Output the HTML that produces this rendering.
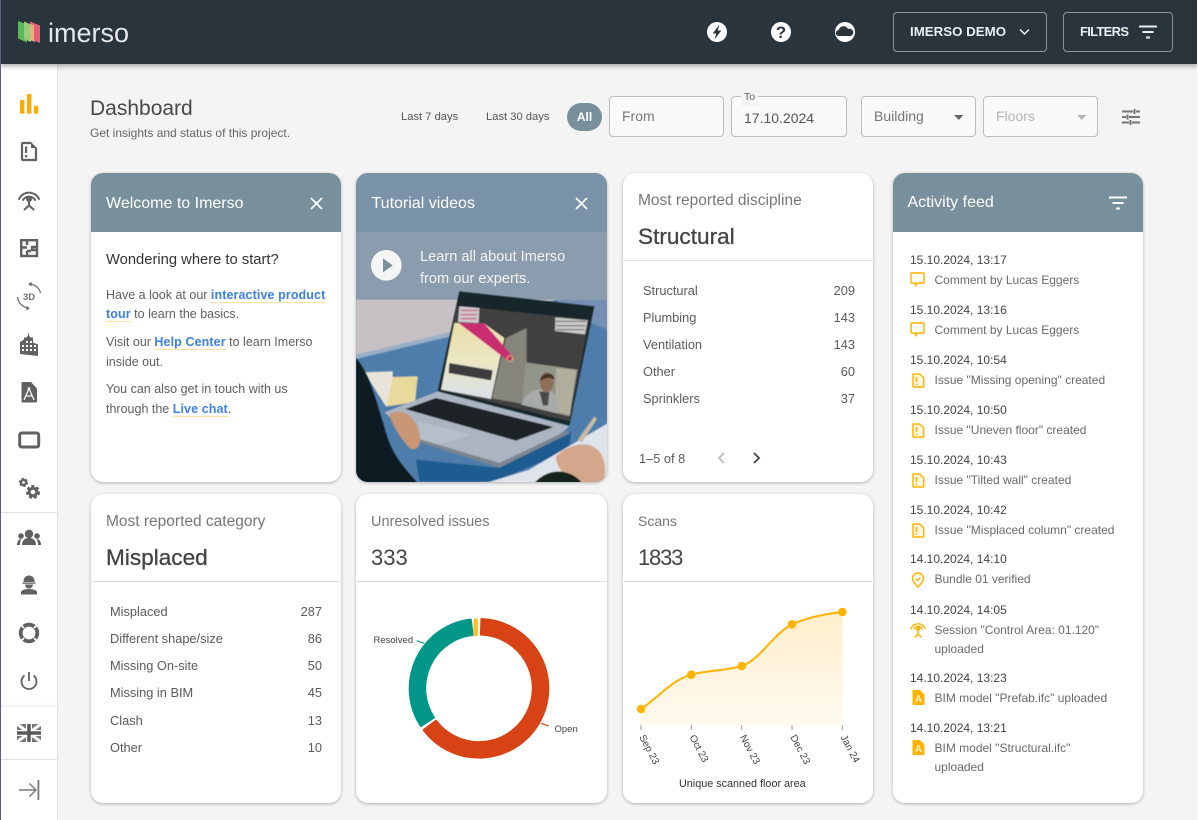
<!DOCTYPE html>
<html lang="en"><head><meta charset="utf-8"><title>Imerso Dashboard</title>
<style>
*{box-sizing:border-box}
html,body{margin:0;padding:0}
body{width:1198px;height:820px;overflow:hidden;position:relative;background:#f4f4f4;font-family:"Liberation Sans",Arial,sans-serif;color:#555;font-size:12px}
.t{position:absolute;white-space:nowrap;line-height:20px;margin-top:1px}
.r{text-align:right}
.card{position:absolute;background:#fff;border-radius:12px;box-shadow:0 1px 3px rgba(0,0,0,.28);overflow:hidden}
.head{position:absolute;left:0;top:0;width:100%;height:59px;background:#78909c}
.hline{position:absolute;height:1px;background:#e0e0e0}
.ct{font-size:15.500px;color:#777}
.cv{font-size:22.600px;color:#444;font-weight:400;-webkit-text-stroke:.3px #444}
.wt{font-size:16px;color:#fff}
.b{font-size:12.800px;color:#5a5a5a}
.w{font-size:12.500px;color:#5f5f5f}
.d{font-size:12px;color:#444;margin-top:0}
.f{font-size:12px;color:#6a6a6a;margin-top:0}
a{color:#3d80de;font-weight:bold;text-decoration:none;border-bottom:1px solid #ffe0a0;letter-spacing:.1px}
.inp{position:absolute;top:96px;height:40.5px;border:1px solid #bdbdbd;border-radius:4px;background:#fafafa}
svg{position:absolute;overflow:visible}
</style></head><body>

<div style="position:absolute;left:0;top:64px;width:58px;height:756px;background:#fff;border-right:1px solid #e4e4e4"></div>
<div style="position:absolute;left:1px;top:512px;width:56px;height:1px;background:#e0e0e0"></div>
<div style="position:absolute;left:1px;top:703px;width:56px;height:4px;background:linear-gradient(#fff,#f0f0f0)"></div>
<div style="position:absolute;left:1px;top:759px;width:56px;height:1px;background:#e0e0e0"></div>

<svg style="left:0;top:0" width="58" height="820" viewBox="0 0 58 820">
<rect x="20" y="100" width="4.4" height="13.7" fill="#ffab00"/><rect x="27" y="94" width="4.4" height="19.7" fill="#ffab00"/><rect x="34" y="105.7" width="4.2" height="8" fill="#ffab00"/>
<g fill="none" stroke="#616161" stroke-width="2.2" stroke-linejoin="round">
<path d="M23 143h8.5l4.5 0v4l0 13h-13a1 1 0 0 1-1-1v-15a1 1 0 0 1 1-1z"/>
</g>
<path d="M31 142h6v6h-6z" fill="#fff"/><path d="M31 142l6 6h-6z" fill="#616161"/>
<rect x="25" y="146.500" width="2.200" height="6.500" fill="#616161"/><rect x="25" y="155" width="2.200" height="2.300" fill="#616161"/>
<g fill="none" stroke="#616161" stroke-width="2" stroke-linecap="round">
<path d="M19 199a11 11 0 0 1 20 0"/><path d="M23 200a7 7 0 0 1 12 0"/>
<path d="M29 201v4.500M29 205.500l-4.500 4M29 205.500l4.500 4"/>
</g><circle cx="29" cy="199" r="3" fill="#616161"/>
<g fill="none" stroke="#616161" stroke-width="2.400">
<rect x="21.200" y="240.200" width="15.800" height="15.800"/><path d="M21 247.500h6M27 240v5M27 251v5M31 247h6M32 247v3h5M27 251h4"/>
</g>
<text x="23" y="300" font-size="9.500" font-weight="bold" fill="#707070" font-family="Liberation Sans">3D</text>
<g fill="none" stroke="#707070" stroke-width="1.300"><path d="M29 284a12 12 0 0 1 11.500 9"/><path d="M17.500 297a12 12 0 0 0 11.500 11"/></g>
<path d="M32 282l-4 2 3.500 2.500zM26 306l4 2-3.500 2.500z" fill="#707070"/>
<path d="M20 354v-12l4-2.500v-2h2.500l1.500-2v-2h1v2l1.500 2h2.500v5l5 2v11.500z" fill="#616161"/>
<g fill="#fff"><rect x="26" y="341" width="2" height="2"/><rect x="30" y="341" width="2" height="2"/><rect x="26" y="345" width="2" height="2"/><rect x="30" y="345" width="2" height="2"/><rect x="34" y="345" width="2" height="2"/><rect x="26" y="349" width="2" height="2"/><rect x="30" y="349" width="2" height="2"/><rect x="34" y="349" width="2" height="2"/><rect x="22" y="345" width="2" height="2"/><rect x="22" y="349" width="2" height="2"/></g>
<path d="M22.500 382h8.500l6 6.500v13a1 1 0 0 1-1 1h-13.500a1 1 0 0 1-1-1v-18.500a1 1 0 0 1 1-1z" fill="#616161"/>
<path d="M29 388.500l-5 11.500M29 388.500l5 11.500M25.500 396h7" stroke="#fff" stroke-width="1.200" fill="none"/><circle cx="29" cy="388.500" r="1.300" fill="#fff"/>
<rect x="19.700" y="433" width="19" height="14" rx="2" fill="none" stroke="#616161" stroke-width="3"/>
<circle cx="23.500" cy="482.500" r="2.600" fill="none" stroke="#616161" stroke-width="2.400"/><circle cx="23.500" cy="482.500" r="3.800" fill="none" stroke="#616161" stroke-width="1.600" stroke-dasharray="2 2"/>
<circle cx="33" cy="492" r="3.800" fill="none" stroke="#616161" stroke-width="3"/><circle cx="33" cy="492" r="5.800" fill="none" stroke="#616161" stroke-width="2.400" stroke-dasharray="3 2.100"/>
<g fill="#616161"><circle cx="29" cy="534" r="4.200"/><path d="M22 545c0-5 3-7 7-7s7 2 7 7z"/><circle cx="21" cy="536" r="2.800"/><circle cx="37" cy="536" r="2.800"/><path d="M17 545c0-4 2-6 4.500-6-1 1-1.500 3.500-1.500 6zM41 545c0-4-2-6-4.500-6 1 1 1.500 3.500 1.500 6z"/></g>
<g fill="#616161"><path d="M23.500 581a5.500 5.500 0 0 1 11 0v1h-11z"/><rect x="22.500" y="582.500" width="13" height="1.300"/><path d="M25 584.500h8a4 4 0 0 1-8 0z"/><path d="M21 594.500v-2c0-2.500 4-3.500 8-3.500s8 1 8 3.500v2z"/></g>
<circle cx="29" cy="633" r="8.300" fill="none" stroke="#616161" stroke-width="3.800"/>
<path d="M24 628l-3-3M34 628l3-3M24 638l-3 3M34 638l3 3" stroke="#fff" stroke-width="1.800"/>
<path d="M24.500 675.500a7.500 7.500 0 1 0 9 0" fill="none" stroke="#616161" stroke-width="1.800"/><path d="M29 672v9" stroke="#616161" stroke-width="1.800"/>
<rect x="17" y="724" width="24" height="18" fill="#777"/>
<path d="M17 724l24 18M41 724l-24 18" stroke="#fff" stroke-width="3"/>
<path d="M29 724v18M17 733h24" stroke="#fff" stroke-width="6"/>
<path d="M29 724v18M17 733h24" stroke="#5a5a5a" stroke-width="3.500"/>
<path d="M19 790h17M29.500 783.500l6.500 6.500-6.500 6.500" fill="none" stroke="#777" stroke-width="1.400"/><rect x="37.500" y="780" width="1.800" height="20" fill="#777"/>
</svg>

<div style="position:absolute;left:0;top:0;width:1px;height:820px;background:#5f5b8c;z-index:5"></div>
<div style="position:absolute;left:1197px;top:0;width:1px;height:820px;background:#f8f8f8;z-index:5"></div>

<div style="position:absolute;left:0;top:0;width:1198px;height:64px;background:#29343c;box-shadow:0 2px 5px rgba(0,0,0,.35)"></div>
<svg style="left:0;top:0" width="48" height="64">
<path d="M18 21l9 3.500v18l-9-4z" fill="#5cb85f"/><path d="M24 21.500l7 3v17.500l-7-3z" fill="#98cc7c"/><path d="M30 22l5 2.500v17.500l-5-2z" fill="#e5b07a"/><path d="M30 21.500l10 4v17.500l-6-2.500v-15l-4-1.500z" fill="#e35f76"/>
</svg>
<div class="t" style="left:48px;top:17px;line-height:30px;font-size:27px;color:#e6e9eb">imerso</div>
<svg style="left:707px;top:22px" width="150" height="20">
<circle cx="10" cy="10" r="10" fill="#fff"/><path d="M12.500 2.500l-6.800 9h3.600l-1.800 6 6.800-9h-3.600z" fill="#29343c"/>
<circle cx="74" cy="10" r="10" fill="#fff"/>
<text x="74" y="16" text-anchor="middle" font-size="17" font-weight="bold" fill="#29343c" font-family="Liberation Sans">?</text>
<circle cx="138" cy="10" r="10" fill="#fff"/><path d="M132 14a3 3 0 0 1-.3-6 5 5 0 0 1 9.300-1 3.600 3.600 0 0 1 3 7z" fill="#29343c"/>
</svg>
<div style="position:absolute;left:893px;top:12px;width:154px;height:40px;border:1px solid #8c959b;border-radius:4px"></div>
<div class="t" style="left:910px;top:21px;font-size:13.300px;font-weight:bold;color:#eceff1">IMERSO DEMO</div>
<svg style="left:1019px;top:28px" width="11" height="8"><path d="M1 1.500l4.500 4.500 4.500-4.500" fill="none" stroke="#eceff1" stroke-width="1.500"/></svg>
<div style="position:absolute;left:1063px;top:12px;width:110px;height:40px;border:1px solid #8c959b;border-radius:4px"></div>
<div class="t" style="left:1080px;top:21px;font-size:13px;font-weight:bold;color:#eceff1;letter-spacing:-.7px">FILTERS</div>
<svg style="left:1139px;top:25px" width="18" height="14"><path d="M0 1.500h18M3.500 7h11M7 12.500h4" stroke="#eceff1" stroke-width="2"/></svg>

<div class="t" style="left:90px;top:98px;font-size:21px;color:#484848">Dashboard</div>
<div class="t" style="left:90px;top:122px;font-size:12px;color:#666">Get insights and status of this project.</div>
<div class="t" style="left:401px;top:106px;font-size:11.200px;color:#555">Last 7 days</div>
<div class="t" style="left:486px;top:106px;font-size:11.200px;color:#555">Last 30 days</div>
<div style="position:absolute;left:567px;top:103px;width:35px;height:28px;border-radius:14px;background:#78909c;color:#fff;font-size:12px;font-weight:bold;text-align:center;line-height:28px">All</div>
<div class="inp" style="left:609px;width:115px"></div>
<div class="t" style="left:622px;top:105px;font-size:14px;color:#777">From</div>
<div class="inp" style="left:731px;width:116px"></div>
<div class="t" style="left:741px;top:87px;font-size:10.500px;color:#666;background:#f4f4f4;padding:0 3px;line-height:18px">To</div>
<div class="t" style="left:744px;top:107px;font-size:14px;color:#555">17.10.2024</div>
<div class="inp" style="left:861px;width:115px"></div>
<div class="t" style="left:874px;top:105px;font-size:14px;color:#777">Building</div>
<svg style="left:954px;top:115px" width="10" height="5"><path d="M0 0h9.500l-4.750 5z" fill="#666"/></svg>
<div class="inp" style="left:983px;width:115px"></div>
<div class="t" style="left:996px;top:105px;font-size:14px;color:#b5b5b5">Floors</div>
<svg style="left:1077px;top:115px" width="10" height="5"><path d="M0 0h9.500l-4.750 5z" fill="#b5b5b5"/></svg>
<svg style="left:1122px;top:109px" width="18" height="16"><path d="M0 2.500h11M14 2.500h4M0 8h4M7 8h11M0 13.500h7M10 13.500h8M12.500 0v5M5.500 5.500v5M8.500 11v5" stroke="#757575" stroke-width="2" fill="none"/></svg>

<div class="card" style="left:91px;top:173px;width:250px;height:309px"><div class="head"></div></div>
<div class="t wt" style="left:106px;top:193px">Welcome to Imerso</div>
<svg style="left:310px;top:197px" width="13" height="13"><path d="M1 1l11 11M12 1l-11 11" stroke="#fff" stroke-width="1.800"/></svg>
<div class="t" style="left:106px;top:249px;font-size:14.750px;color:#333">Wondering where to start?</div>
<div class="t w" style="left:106px;top:284px">Have a look at our <a>interactive product</a></div>
<div class="t w" style="left:106px;top:303px"><a>tour</a> to learn the basics.</div>
<div class="t w" style="left:106px;top:331px">Visit our <a>Help Center</a> to learn Imerso</div>
<div class="t w" style="left:106px;top:351px">inside out.</div>
<div class="t w" style="left:106px;top:378px">You can also get in touch with us</div>
<div class="t w" style="left:106px;top:398px">through the <a>Live chat</a>.</div>

<div class="card" style="left:356px;top:173px;width:251px;height:309px;background:#8a9aab">
<svg style="left:0;top:0" width="252" height="310" viewBox="0 0 756 930">
<defs><linearGradient id="w" x1="0" y1="0" x2="0" y2="1"><stop offset="0" stop-color="#bdb8c2"/><stop offset="1" stop-color="#d6d0d2"/></linearGradient>
<linearGradient id="sc" x1="0" y1="0" x2="0" y2="1"><stop offset="0" stop-color="#e8dfa8"/><stop offset=".5" stop-color="#ece6c4"/><stop offset="1" stop-color="#d8e1ea"/></linearGradient>
<filter id="bl" x="-5%" y="-5%" width="110%" height="110%"><feGaussianBlur stdDeviation="1.800"/></filter></defs>
<g filter="url(#bl)">
<rect y="370" width="756" height="560" fill="#c7c0c5"/>
<path d="M600 380L756 375V930H0V550L280 480Z" fill="#507dab"/>
<path d="M600 380L756 375V470L680 440z" fill="#7490b4"/>
<path d="M0 545L280 478l4 12L0 558z" fill="#98afc6"/>
<path d="M25 598l85-3 0 100-20 5z" fill="#e8e4da"/><path d="M110 612l75-2-8 78-85 12z" fill="#e9d99a"/>
</g>
<rect width="756" height="177" fill="#7a93a8"/>
<rect y="177" width="756" height="203" fill="#8a9cae"/>
<g filter="url(#bl)">
<path d="M180 860L430 885 645 775 640 830 420 925H190z" fill="#1f5b91"/>
<path d="M85 718L245 655 640 760 600 795 430 870 180 800z" fill="#abb4c1"/>
<path d="M180 795l250 75 205-98 5 10-210 102L190 808z" fill="#7b8591"/>
<path d="M148 708L240 675 592 762 480 803z" fill="#1c2025"/>
<path d="M185 745L295 772 345 785 250 815 195 800z" fill="#b6bec9"/>
<path d="M310 355L715 400 640 758 245 655z" fill="#18252b"/>
<path d="M303 398L700 440 640 745 255 650z" fill="#3f3f40"/>
<path d="M295 450L385 452 445 495 405 678 255 650z" fill="url(#sc)"/>
<path d="M450 495L512 465 512 565 495 692 408 676z" fill="#85857c"/>
<path d="M308 450L385 452 472 552 460 566z" fill="#c92f72"/>
<circle cx="462" cy="557" r="9" fill="none" stroke="#e9d84a" stroke-width="3" stroke-dasharray="4 3"/>
<path d="M280 570L410 592 405 622 278 600z" fill="#3c3d40"/>
<path d="M598 433l97 9-8 42-90-10z" fill="#c9c9c9"/>
<path d="M600 445h90M600 458h88M600 470h85" stroke="#555" stroke-width="2.500"/>
<path d="M310 400l60 5-2 45-62-3z" fill="#cfc8cb"/><path d="M315 412h50M314 425h48M313 437h48" stroke="#c92f72" stroke-width="3"/>
<path d="M510 568L665 590 640 730 495 695z" fill="#92958a"/>
<path d="M600 585l60 7-18 135-45-12z" fill="#b0ae9c"/>
<path d="M498 695C505 660 535 645 570 650 600 655 610 690 607 722z" fill="#a6aba9"/>
<path d="M550 655l30 2-4 40-15 0z" fill="#4a4c48"/>
<ellipse cx="572" cy="628" rx="20" ry="30" fill="#8f6d56"/>
<path d="M552 625c0-25 40-35 44-5-10-8-30-8-44 5z" fill="#493627"/>
<path d="M0 555C40 600 60 680 90 780 110 850 150 890 185 930H0z" fill="#0e1a20"/>
<path d="M100 725C130 705 175 720 190 780 198 825 180 835 160 825 130 790 110 760 100 725z" fill="#c99676"/>
<path d="M756 750L520 890 390 930H756z" fill="#dfe3ea"/>
<path d="M665 800l50-70 8 8-45 70z" fill="#cbb9a3"/>
<path d="M600 850C630 820 690 795 730 835 756 870 750 930 730 930H650C620 900 600 880 600 850z" fill="#d4a78d"/>
<path d="M535 930C570 890 630 880 675 925V930z" fill="#14201f"/>
</g>
<circle cx="91" cy="277" r="46" fill="#f5f5f5"/><path d="M81 256l29 21-29 21z" fill="#78909c"/>
</svg></div>
<div class="t wt" style="left:371.500px;top:193px">Tutorial videos</div>
<svg style="left:575px;top:197px" width="13" height="13"><path d="M1 1l11 11M12 1l-11 11" stroke="#fff" stroke-width="1.800"/></svg>
<div class="t" style="left:420px;top:246px;font-size:14.600px;color:#f5f5f5">Learn all about Imerso</div>
<div class="t" style="left:420px;top:268px;font-size:14.600px;color:#f5f5f5">from our experts.</div>

<div class="card" style="left:623px;top:173px;width:250px;height:309px"><div class="hline" style="left:0;top:87px;width:250px"></div></div>
<div class="t ct" style="left:638px;top:190px">Most reported discipline</div>
<div class="t cv" style="left:638px;top:226px">Structural</div>
<div class="t b" style="left:643px;top:280px">Structural</div><div class="t b r" style="left:815px;width:40px;top:280px">209</div>
<div class="t b" style="left:643px;top:307px">Plumbing</div><div class="t b r" style="left:815px;width:40px;top:307px">143</div>
<div class="t b" style="left:643px;top:334px">Ventilation</div><div class="t b r" style="left:815px;width:40px;top:334px">143</div>
<div class="t b" style="left:643px;top:361px">Other</div><div class="t b r" style="left:815px;width:40px;top:361px">60</div>
<div class="t b" style="left:643px;top:388px">Sprinklers</div><div class="t b r" style="left:815px;width:40px;top:388px">37</div>
<div class="t b" style="left:639px;top:448px">1–5 of 8</div>
<svg style="left:717px;top:452px" width="44" height="12"><path d="M7 1L2 6l5 5" fill="none" stroke="#bdbdbd" stroke-width="1.800"/><path d="M37 1l5 5-5 5" fill="none" stroke="#444" stroke-width="1.800"/></svg>

<div class="card" style="left:91px;top:494px;width:250px;height:309px"><div class="hline" style="left:0;top:87px;width:250px"></div></div>
<div class="t ct" style="left:106px;top:511px">Most reported category</div>
<div class="t cv" style="left:106px;top:547px">Misplaced</div>
<div class="t b" style="left:110px;top:601px">Misplaced</div><div class="t b r" style="left:282px;width:40px;top:601px">287</div>
<div class="t b" style="left:110px;top:628px">Different shape/size</div><div class="t b r" style="left:282px;width:40px;top:628px">86</div>
<div class="t b" style="left:110px;top:655px">Missing On-site</div><div class="t b r" style="left:282px;width:40px;top:655px">50</div>
<div class="t b" style="left:110px;top:682px">Missing in BIM</div><div class="t b r" style="left:282px;width:40px;top:682px">45</div>
<div class="t b" style="left:110px;top:710px">Clash</div><div class="t b r" style="left:282px;width:40px;top:710px">13</div>
<div class="t b" style="left:110px;top:737px">Other</div><div class="t b r" style="left:282px;width:40px;top:737px">10</div>

<div class="card" style="left:356px;top:494px;width:251px;height:309px"><div class="hline" style="left:0;top:87px;width:251px"></div></div>
<div class="t ct" style="left:371px;top:511px;font-size:14.500px">Unresolved issues</div>
<div class="t" style="left:371px;top:547px;font-size:22px;color:#444">333</div>
<svg style="left:0;top:0" width="1198" height="820" pointer-events="none">
<path d="M481.42 619.04A69.3 69.3 0 1 1 423.66 730L436.03 720.68A53.8 53.8 0 1 0 480.88 634.53Z" fill="#d84315" stroke="#d84315" stroke-width="2" stroke-linejoin="round"/>
<path d="M420.88 726.04A69.3 69.3 0 0 1 470.79 619.48L472.63 634.88A53.8 53.8 0 0 0 433.88 717.6Z" fill="#009688" stroke="#009688" stroke-width="2" stroke-linejoin="round"/>
<path d="M475.700 620.500V634" stroke="#fbc02d" stroke-width="4.600" stroke-linecap="round"/>
<path d="M416.700 640.700L424.300 643.300" stroke="#009688" stroke-width="1.200"/>
<path d="M541 723.300L548.700 726" stroke="#d84315" stroke-width="1.200"/>
<text x="373.500" y="643" font-size="9.500" fill="#444" font-family="Liberation Sans">Resolved</text>
<text x="554.500" y="732" font-size="9.500" fill="#444" font-family="Liberation Sans">Open</text>
</svg>

<div class="card" style="left:623px;top:494px;width:250px;height:309px"><div class="hline" style="left:0;top:87px;width:250px"></div></div>
<div class="t ct" style="left:638px;top:510px;font-size:14px">Scans</div>
<div class="t" style="left:638px;top:547px;font-size:22px;color:#444;letter-spacing:-1.200px">1833</div>
<svg style="left:0;top:0" width="1198" height="820" pointer-events="none">
<defs><linearGradient id="a" x1="0" y1="0" x2="0" y2="1"><stop offset="0" stop-color="#ffeecb"/><stop offset="1" stop-color="#fffaf0"/></linearGradient></defs>
<path d="M641 709C660 696 672 680 691.300 674.700C708 670 725 671 741.700 666C760 660 772 635 792 624.300C808 617 825 614 842.300 612V725H641Z" fill="url(#a)"/>
<path d="M641 709C660 696 672 680 691.300 674.700C708 670 725 671 741.700 666C760 660 772 635 792 624.300C808 617 825 614 842.300 612" fill="none" stroke="#ffb300" stroke-width="2"/>
<g fill="#ffb300"><circle cx="641" cy="709" r="4.300"/><circle cx="691.300" cy="674.700" r="4.300"/><circle cx="741.700" cy="666" r="4.300"/><circle cx="792" cy="624.300" r="4.300"/><circle cx="842.300" cy="612" r="4.300"/></g>
<path d="M641 725v5M691.300 725v5M741.700 725v5M792 725v5M842.300 725v5" stroke="#999" stroke-width="1"/>
<g font-size="10" fill="#444" font-family="Liberation Sans">
<text transform="translate(639 737) rotate(62)">Sep 23</text>
<text transform="translate(689.300 737) rotate(62)">Oct 23</text>
<text transform="translate(739.700 737) rotate(62)">Nov 23</text>
<text transform="translate(790 737) rotate(62)">Dec 23</text>
<text transform="translate(840.300 737) rotate(62)">Jan 24</text>
</g>
<text x="679" y="787" font-size="10.800" fill="#333" font-family="Liberation Sans">Unique scanned floor area</text>
</svg>

<div class="card" style="left:893px;top:173px;width:250px;height:630px"><div class="head"></div></div>
<div class="t wt" style="left:907.500px;top:192px">Activity feed</div>
<svg style="left:1109px;top:196px" width="18" height="14"><path d="M0 1.500h18M3.500 7h11M7 12.500h4" stroke="#fff" stroke-width="2"/></svg>

<svg width="0" height="0" style="left:0;top:0"><defs>
<g id="c"><path d="M1.800 1h11.400a.8.800 0 0 1 .8.800v8.400a.8.800 0 0 1-.8.800H8l-2.500 2.500V11H1.800a.8.800 0 0 1-.8-.8V1.800a.8.800 0 0 1 .8-.800z" fill="none" stroke="#ffb300" stroke-width="1.500"/></g>
<g id="i"><path d="M1.700 1h6l4 4v8.300a.7.700 0 0 1-.7.700H1.700a.7.700 0 0 1-.7-.7V1.700a.7.700 0 0 1 .7-.7z" fill="#fff8e5" stroke="#ffb300" stroke-width="1.500"/><path d="M4.500 4v5M4.500 10.500v1.500" stroke="#ffb300" stroke-width="1.600"/></g>
<g id="m"><path d="M1.500 0h6.500l4.500 4.500v9.500a1 1 0 0 1-1 1H1.500a1 1 0 0 1-1-1V1a1 1 0 0 1 1-1z" fill="#ffb300"/><path d="M6.500 5l-3 7.500M6.500 5l3 7.500M4.500 10h4" stroke="#fff" stroke-width="1" fill="none"/></g>
</defs></svg>
<svg style="left:910px;top:272px" width="16" height="16"><use href="#c"/></svg>
<svg style="left:910px;top:322px" width="16" height="16"><use href="#c"/></svg>
<svg style="left:912px;top:373px" width="14" height="16"><use href="#i"/></svg>
<svg style="left:912px;top:423px" width="14" height="16"><use href="#i"/></svg>
<svg style="left:912px;top:473px" width="14" height="16"><use href="#i"/></svg>
<svg style="left:912px;top:523px" width="14" height="16"><use href="#i"/></svg>
<svg style="left:911px;top:572px" width="14" height="16"><path d="M7 1a5.500 5.500 0 0 1 5.500 5.500C12.500 10 9 13 7 15 5 13 1.500 10 1.500 6.500A5.500 5.500 0 0 1 7 1z" fill="none" stroke="#ffb300" stroke-width="1.500"/><path d="M4.500 6.500l2 2 3-3" fill="none" stroke="#ffb300" stroke-width="1.300"/></svg>
<svg style="left:910px;top:621px" width="16" height="18"><g fill="none" stroke="#ffb300" stroke-width="1.500" stroke-linecap="round"><path d="M1 7.500a7.500 7.500 0 0 1 14 0"/><path d="M4 8a4.500 4.500 0 0 1 8 0"/><path d="M8 9v4M8 13l-3 3M8 13l3 3"/></g><circle cx="8" cy="8" r="2" fill="#ffb300"/></svg>
<svg style="left:912px;top:690px" width="14" height="16"><use href="#m"/></svg>
<svg style="left:912px;top:740px" width="14" height="16"><use href="#m"/></svg>

<div class="t d" style="left:910px;top:250px">15.10.2024, 13:17</div><div class="t f" style="left:934.500px;top:270px">Comment by Lucas Eggers</div>
<div class="t d" style="left:910px;top:300px">15.10.2024, 13:16</div><div class="t f" style="left:934.500px;top:320px">Comment by Lucas Eggers</div>
<div class="t d" style="left:910px;top:350px">15.10.2024, 10:54</div><div class="t f" style="left:934.500px;top:370px">Issue "Missing opening" created</div>
<div class="t d" style="left:910px;top:400px">15.10.2024, 10:50</div><div class="t f" style="left:934.500px;top:420px">Issue "Uneven floor" created</div>
<div class="t d" style="left:910px;top:450px">15.10.2024, 10:43</div><div class="t f" style="left:934.500px;top:470px">Issue "Tilted wall" created</div>
<div class="t d" style="left:910px;top:500px">15.10.2024, 10:42</div><div class="t f" style="left:934.500px;top:520px">Issue "Misplaced column" created</div>
<div class="t d" style="left:910px;top:549px">14.10.2024, 14:10</div><div class="t f" style="left:934.500px;top:569px">Bundle 01 verified</div>
<div class="t d" style="left:910px;top:600px">14.10.2024, 14:05</div><div class="t f" style="left:934.500px;top:620px">Session "Control Area: 01.120"</div><div class="t f" style="left:934.500px;top:639px">uploaded</div>
<div class="t d" style="left:910px;top:668px">14.10.2024, 13:23</div><div class="t f" style="left:934.500px;top:688px">BIM model "Prefab.ifc" uploaded</div>
<div class="t d" style="left:910px;top:718px">14.10.2024, 13:21</div><div class="t f" style="left:934.500px;top:738px">BIM model "Structural.ifc"</div><div class="t f" style="left:934.500px;top:757px">uploaded</div>

</body></html>
